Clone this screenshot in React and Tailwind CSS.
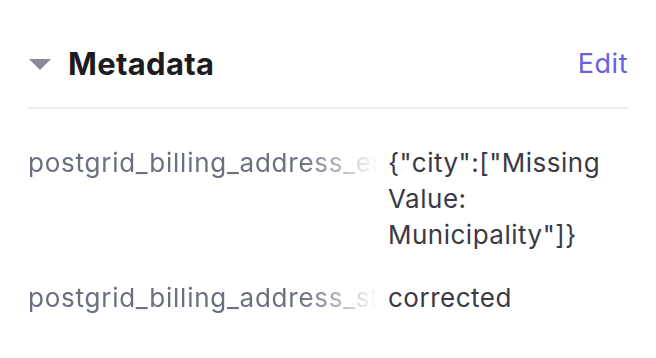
import React from "react";

const rows = [
  { key: "postgrid_billing_address_errors", value: '{"city":["Missing Value: Municipality"]}' },
  { key: "postgrid_billing_address_status", value: "corrected" },
];

const App = () => {
  return (
    <div className="min-h-screen w-full bg-white px-[28px] pt-[40px] font-['Inter',sans-serif]">
      <div className="flex items-center justify-between h-[48px]">
        <div className="flex items-center">
          <svg width="22" height="11" viewBox="0 0 22 11" className="ml-px mr-[17px]">
            <path d="M0 0 H22 L11 11 Z" fill="#8a8a96" />
          </svg>
          <h2 className="text-[31px] font-bold text-[#1b1b20] tracking-[0.3px]">Metadata</h2>
        </div>
        <button className="text-[27px] text-[#6a5fe0] tracking-[0.5px]">Edit</button>
      </div>
      <div className="mt-[19px] h-[2px] bg-[#ececee]" />
      <div className="mt-[36px] flex flex-col gap-[27px]">
        {rows.map((r) => (
          <div key={r.key} className="flex gap-[10px] text-[26px] leading-[36px]">
            <div className="w-[350px] shrink-0 overflow-hidden whitespace-nowrap text-[#6b7080] tracking-[0.75px] [mask-image:linear-gradient(to_right,black_78%,transparent)]">
              {r.key}
            </div>
            <div className="flex-1 text-[#3a3a44] tracking-[0.5px] break-words">{r.value}</div>
          </div>
        ))}
      </div>
    </div>
  );
};

export default App;
